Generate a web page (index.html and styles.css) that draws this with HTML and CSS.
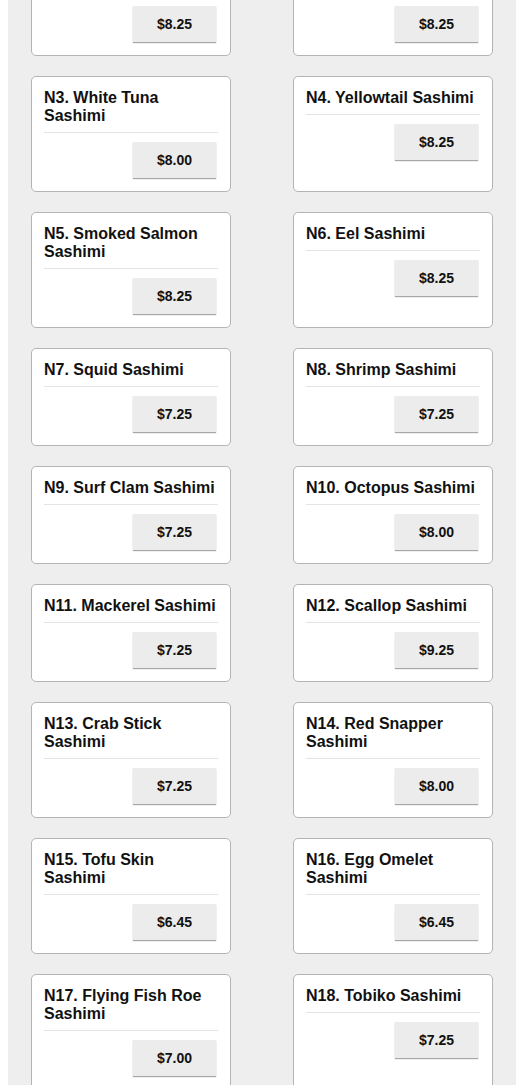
FILE: index.html
```html
<!DOCTYPE html>
<html>
<head>
<meta charset="utf-8">
<link rel="stylesheet" href="styles.css">
</head>
<body>
<div class="page">
  <div class="grid">
    <div class="card"><h3 class="title">N1. Tuna Sashimi</h3><div class="price-row"><button class="price">$8.25</button></div></div>
    <div class="card"><h3 class="title">N2. Salmon Sashimi</h3><div class="price-row"><button class="price">$8.25</button></div></div>
    <div class="card"><h3 class="title">N3. White Tuna Sashimi</h3><div class="price-row"><button class="price">$8.00</button></div></div>
    <div class="card"><h3 class="title">N4. Yellowtail Sashimi</h3><div class="price-row"><button class="price">$8.25</button></div></div>
    <div class="card"><h3 class="title">N5. Smoked Salmon Sashimi</h3><div class="price-row"><button class="price">$8.25</button></div></div>
    <div class="card"><h3 class="title">N6. Eel Sashimi</h3><div class="price-row"><button class="price">$8.25</button></div></div>
    <div class="card"><h3 class="title">N7. Squid Sashimi</h3><div class="price-row"><button class="price">$7.25</button></div></div>
    <div class="card"><h3 class="title">N8. Shrimp Sashimi</h3><div class="price-row"><button class="price">$7.25</button></div></div>
    <div class="card"><h3 class="title">N9. Surf Clam Sashimi</h3><div class="price-row"><button class="price">$7.25</button></div></div>
    <div class="card"><h3 class="title">N10. Octopus Sashimi</h3><div class="price-row"><button class="price">$8.00</button></div></div>
    <div class="card"><h3 class="title">N11. Mackerel Sashimi</h3><div class="price-row"><button class="price">$7.25</button></div></div>
    <div class="card"><h3 class="title">N12. Scallop Sashimi</h3><div class="price-row"><button class="price">$9.25</button></div></div>
    <div class="card"><h3 class="title">N13. Crab Stick Sashimi</h3><div class="price-row"><button class="price">$7.25</button></div></div>
    <div class="card"><h3 class="title">N14. Red Snapper Sashimi</h3><div class="price-row"><button class="price">$8.00</button></div></div>
    <div class="card"><h3 class="title">N15. Tofu Skin Sashimi</h3><div class="price-row"><button class="price">$6.45</button></div></div>
    <div class="card"><h3 class="title">N16. Egg Omelet Sashimi</h3><div class="price-row"><button class="price">$6.45</button></div></div>
    <div class="card"><h3 class="title">N17. Flying Fish Roe Sashimi</h3><div class="price-row"><button class="price">$7.00</button></div></div>
    <div class="card"><h3 class="title">N18. Tobiko Sashimi</h3><div class="price-row"><button class="price">$7.25</button></div></div>
  </div>
</div>
</body>
</html>
```
FILE: styles.css
```css
html, body {
  margin: 0;
  padding: 0;
  background: #ffffff;
  font-family: "Liberation Sans", Arial, sans-serif;
  color: #111111;
}

.page {
  display: flow-root;
  margin-left: 8px;
  width: 508px;
  min-height: 1085px;
  background: #eeeeee;
  box-sizing: border-box;
  padding: 0 23px 40px;
}

.grid {
  margin-top: -42px;
  display: grid;
  grid-template-columns: 200px 200px;
  column-gap: 62px;
  row-gap: 20px;
}

.card {
  background: #ffffff;
  border: 1px solid #b4b4b4;
  border-radius: 5px;
  padding: 12px 12px 13px;
  display: flex;
  flex-direction: column;
}

.title {
  margin: 0;
  font-size: 16px;
  line-height: 18px;
  font-weight: bold;
  color: #111111;
  padding-bottom: 7px;
  border-bottom: 1px solid #e4e4e4;
}

.price-row {
  display: flex;
  justify-content: flex-end;
  margin-top: 9px;
  padding-right: 2px;
}

.price {
  width: 83px;
  height: 36px;
  border: none;
  border-radius: 0;
  background: #ececec;
  box-shadow: 0 1px 1px rgba(0, 0, 0, 0.35);
  font-family: "Liberation Sans", Arial, sans-serif;
  font-size: 14px;
  font-weight: bold;
  color: #111111;
  padding: 0;
}
```
